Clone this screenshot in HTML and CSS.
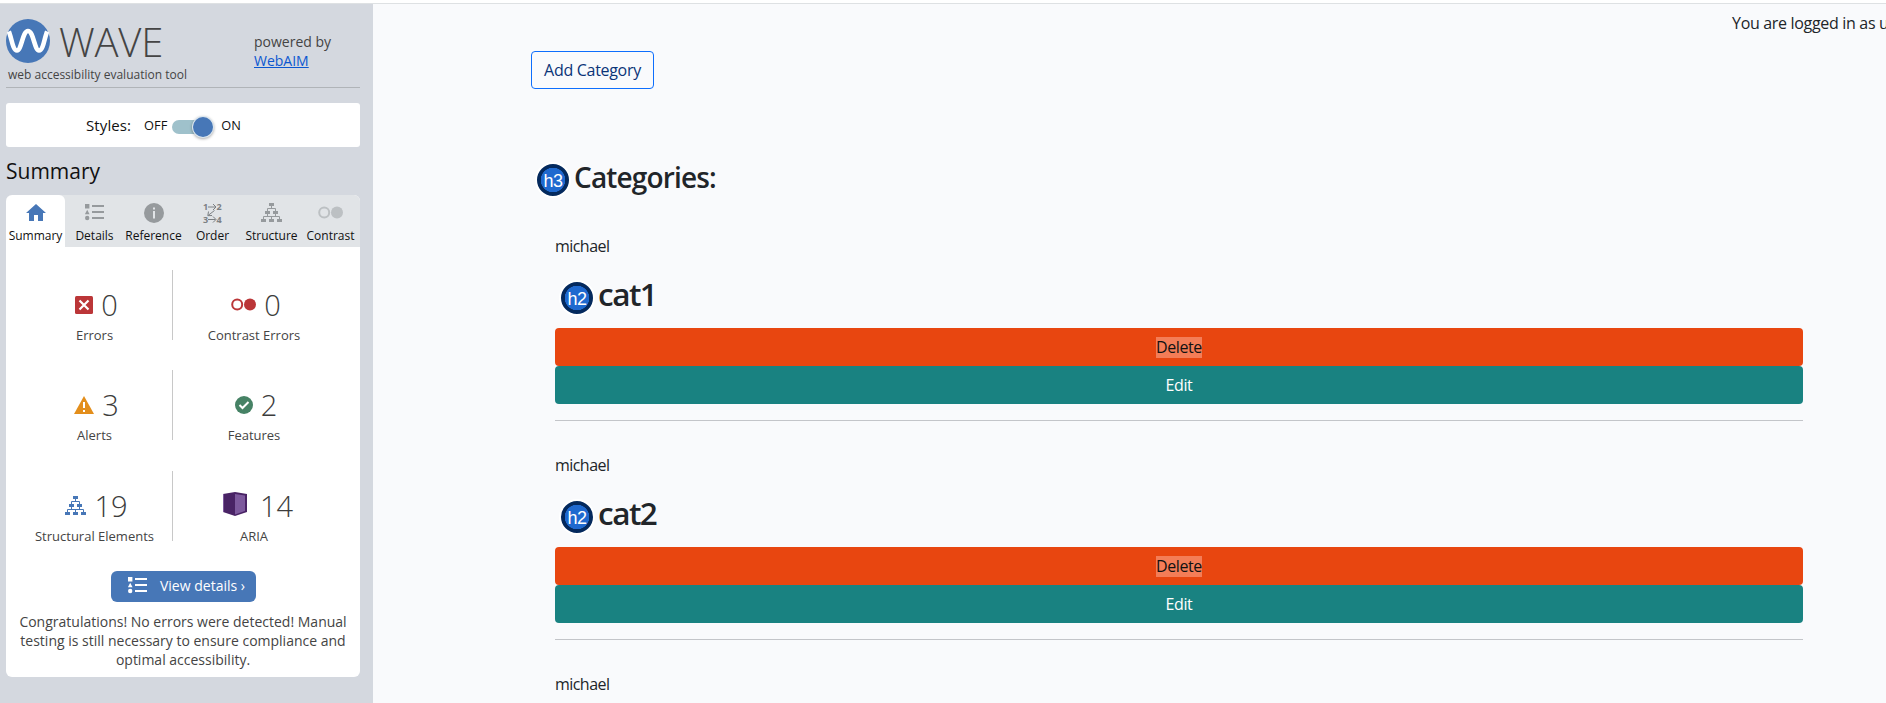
FILE: index.html
```html
<!DOCTYPE html>
<html lang="en">
<head>
<meta charset="utf-8">
<title>Categories</title>
<link rel="stylesheet" href="styles.css">
</head>
<body>
<svg class="defs" width="0" height="0">
  <symbol id="list" viewBox="0 0 20 17"><path d="M0 0h4.400v4.400H0zM2.200 5.800 4.600 10.300H-.2z"/><circle cx="2.200" cy="14" r="2.200"/><path d="M7 1h12v2H7zM7 7h12v2H7zM7 13h12v2H7z"/></symbol>
  <symbol id="tree" viewBox="0 0 21 19"><path d="M8 0h5v3H8zM4 8h5v3H4zM12 8h5v3h-5zM0 16h5v3H0zM8 16h5v3H8zM16 16h5v3h-5z"/><path fill="none" stroke="currentColor" d="M10.500 3v2.500M6.500 8V5.500h8V8M6.500 11v2.500M14.500 11v2.500M2.500 16v-2.500h16V16M10.500 13.500V16"/></symbol>
  <symbol id="dots" viewBox="0 0 25 13"><circle cx="6.200" cy="6.500" r="5" fill="none" stroke="currentColor" stroke-width="2"/><circle cx="19" cy="6.500" r="6"/></symbol>
</svg>
<div class="topbar"></div>
<div class="shell">
  <aside class="sidebar">
    <header class="brand">
      <div class="brand-main">
        <div class="brand-row">
          <svg class="logo" viewBox="0 0 44 44"><circle cx="22" cy="22" r="22" fill="#4777b7"/><path d="M2.800 12.500C5.500 18 6.500 31.500 11 31.500S16.500 12 22 12s6.500 19.500 11 19.500S38.500 18 41.200 12.500" fill="none" stroke="#fff" stroke-width="4.600"/></svg>
          <span class="wordmark">WAVE</span>
        </div>
        <div class="tagline">web accessibility evaluation tool</div>
      </div>
      <div class="powered">powered by<br><a href="#">WebAIM</a></div>
    </header>
    <div class="styles-box">
      <span class="styles-label">Styles:</span><span class="state">OFF</span><span class="toggle"><span class="knob"></span></span><span class="state">ON</span>
    </div>
    <h2 class="title">Summary</h2>
    <div class="panel">
      <nav class="tabs">
        <div class="tab active"><svg width="20" height="17" viewBox="0 0 20 17"><path d="M10 0 20 9h-3v8h-5v-6H8v6H3V9H0z"/></svg><span>Summary</span></div>
        <div class="tab"><svg width="20" height="17"><use href="#list"/></svg><span>Details</span></div>
        <div class="tab"><svg width="20" height="20" viewBox="0 0 20 20"><circle cx="10" cy="10" r="10"/><path fill="#e1e4e7" d="M9 4.500h2v2H9zM9 8h2v7.500H9z"/></svg><span>Reference</span></div>
        <div class="tab"><svg class="order" width="20" height="20" viewBox="0 0 20 20"><text x="0" y="7">1</text><text x="13.500" y="7">2</text><text x="0" y="19.500">3</text><text x="13.500" y="19.500">4</text><path d="M5 4h7.500M10 1l3 3-3 3M5 16.500h7.500M10 13.500l3 3-3 3M11.500 7.500 5 12.500M5.500 8.500 4.800 12.700 9 12.500"/></svg><span>Order</span></div>
        <div class="tab"><svg width="21" height="19"><use href="#tree"/></svg><span>Structure</span></div>
        <div class="tab faded"><svg width="25" height="13"><use href="#dots"/></svg><span>Contrast</span></div>
      </nav>
      <div class="stats">
        <div class="stat left"><div class="num"><svg width="18" height="18" viewBox="0 0 18 18"><rect width="18" height="18" rx="1.500" fill="#bb3638"/><path d="m4.500 4.500 9 9m0-9-9 9" stroke="#fff" stroke-width="2.200"/></svg><b>0</b></div><span>Errors</span></div>
        <div class="stat"><div class="num"><svg class="red" width="25" height="13"><use href="#dots"/></svg><b>0</b></div><span>Contrast Errors</span></div>
        <div class="stat left"><div class="num"><svg width="20" height="18" viewBox="0 0 20 18"><path d="m10 0 10 18H0z" fill="#e38e1b"/><path fill="#fff" d="M9 6h2v6H9zM9 14h2v2H9z"/></svg><b>3</b></div><span>Alerts</span></div>
        <div class="stat"><div class="num"><svg width="18" height="18" viewBox="0 0 18 18"><circle cx="9" cy="9" r="9" fill="#468265"/><path d="m4.500 9 3 3 6-6" fill="none" stroke="#fff" stroke-width="2"/></svg><b>2</b></div><span>Features</span></div>
        <div class="stat left"><div class="num"><svg class="blue" width="21" height="19"><use href="#tree"/></svg><b>19</b></div><span>Structural Elements</span></div>
        <div class="stat"><div class="num wide"><svg width="24" height="24" viewBox="0 0 24 24"><path d="M0 2 12 0l12 2v18l-12 4L0 20z" fill="#492365"/><path d="m12 2 10 1.500V19l-10 3.500z" fill="#7d599d"/><path d="M.5 2v18" stroke="#7d599d"/></svg><b>14</b></div><span>ARIA</span></div>
      </div>
      <button class="details"><svg width="20" height="17"><use href="#list"/></svg><span>View details ›</span></button>
      <p class="message">Congratulations! No errors were detected! Manual<br>testing is still necessary to ensure compliance and<br>optimal accessibility.</p>
    </div>
  </aside>
  <main class="content">
    <div class="login">You are logged in as user</div>
    <button class="add">Add Category</button>
    <h3 class="heading"><span class="badge">h3</span><span>Categories:</span></h3>
    <section class="category">
      <div class="owner">michael</div>
      <h2 class="name"><span class="badge">h2</span><span>cat1</span></h2>
      <button class="bar delete"><span>Delete</span></button>
      <button class="bar edit">Edit</button>
    </section>
    <section class="category">
      <div class="owner">michael</div>
      <h2 class="name"><span class="badge">h2</span><span>cat2</span></h2>
      <button class="bar delete"><span>Delete</span></button>
      <button class="bar edit">Edit</button>
    </section>
    <section class="category">
      <div class="owner">michael</div>
    </section>
  </main>
</div>
</body>
</html>
```

FILE: styles.css
```css
* { box-sizing: border-box; }
body { margin: 0; height: 703px; overflow: hidden; background: #f9fafc; font-family: "Open Sans", sans-serif; white-space: nowrap; }
svg { display: block; flex: none; fill: currentColor; }
.defs { display: none; }
button { font: inherit; border: 0; margin: 0; padding: 0; display: flex; align-items: center; justify-content: center; }
.topbar { height: 4px; background: #fff; border-bottom: 1px solid #dee1e3; }
.shell { display: flex; height: 699px; }

.sidebar { width: 373px; flex: none; background: #d4d8df; padding: 15px 13px 0 6px; color: #444; }
.brand { display: flex; height: 69px; border-bottom: 1px solid #b0b4b8; }
.brand-main { width: 248px; }
.brand-row { display: flex; height: 44px; }
.logo { width: 44px; height: 44px; }
.wordmark { margin-left: 9px; font-size: 40px; font-weight: 300; line-height: 46px; letter-spacing: -0.200px; }
.tagline { padding: 1px 0 0 2px; font-size: 12px; line-height: 22px; }
.powered { font-size: 14px; line-height: 19px; padding-top: 13px; }
.powered a { color: #0b57d0; }
.styles-box { margin-top: 15px; height: 44px; background: #fff; border-radius: 3px; color: #111; display: flex; align-items: center; padding-left: 80px; }
.styles-label { font-size: 15px; margin-right: 13px; letter-spacing: 0.100px; }
.state { font-size: 12.800px; }
.toggle { width: 41px; height: 14px; border-radius: 7px; background: #9fc1cb; margin: 4px 8px 0 5px; display: flex; justify-content: flex-end; align-items: center; }
.knob { width: 20px; height: 20px; flex: none; border-radius: 50%; background: #4777b7; box-shadow: 0 0 0 1px #dce7ef, 0 1px 3px 1px #0005; }
.title { margin: 9px 0 0; height: 39px; font-size: 21px; font-weight: 400; line-height: 30px; color: #111; }
.panel { height: 482px; background: #fff; border-radius: 6px; overflow: hidden; }
.tabs { height: 52px; background: #e1e4e7; display: grid; grid-template-columns: repeat(6, 59px); }
.tab { display: grid; grid-template-rows: 35px 12px; justify-items: center; align-items: center; font-size: 12px; line-height: 12px; color: #969a9d; }
.tab span { color: #111; }
.tab.active { background: #fff; color: #4777b7; border-radius: 6px 6px 0 0; }
.tab.faded { color: #bcc0c3; }
.order { overflow: visible; color: #7c8083; }
.order text { font-size: 9px; font-weight: 700; }
.order path { fill: none; stroke: currentColor; stroke-width: 1; }
.stats { display: grid; grid-template-columns: 158px 159px; row-gap: 30.500px; padding: 22.800px 0 0 9px; }
.stat { height: 70px; display: flex; flex-direction: column; align-items: center; font-size: 13px; line-height: 18px; padding-left: 2px; }
.stat.left { border-right: 1px solid #c8c8c8; }
.num { display: flex; align-items: center; gap: 8px; height: 56px; padding: 16px 0 2px 4px; font-size: 29px; line-height: 38px; }
.stat:not(.left) { padding-left: 3px; }
.num.wide { gap: 13px; padding-left: 8px; }
.num.wide svg { margin-top: -3px; }
.num b { font-weight: 350; color: #3c3c3c; }
.red { color: #bb3638; }
.blue { color: #4777b7; }
.details { width: 145px; height: 31px; margin: 30.200px 0 0 105px; padding: 0 0 1px 6px; border-radius: 6px; background: #4777b7; color: #fff; font-size: 14px; gap: 12px; }
.message { margin: 10px 0 0; text-align: center; font-size: 14px; line-height: 19px; }

.content { flex: 1; min-width: 0; padding-left: 158px; font-size: 16px; color: #212529; letter-spacing: -0.400px; overflow: hidden; }
.login { margin-left: 1201px; height: 47px; padding-top: 7px; line-height: 24px; letter-spacing: -0.320px; }
.add { width: 123px; height: 38px; border: 1px solid #0d6efd; border-radius: 4px; background: transparent; color: #0a3478; letter-spacing: -0.300px; }
.heading { margin: 71px 0 0 4px; height: 42px; display: flex; font-size: 28px; line-height: 34px; font-weight: 600; letter-spacing: -0.850px; }
.badge { width: 36px; height: 36px; flex: none; border: 2px solid #fff; border-radius: 50%; background: radial-gradient(circle, #1f69cf 12px, #04295d 12.500px); color: #fff; font: 400 18px/35px "Liberation Sans", sans-serif; letter-spacing: -0.500px; text-align: center; margin: 2px 3px 0 0; }
.category { width: 1248px; height: 219px; margin-left: 24px; padding-top: 32px; border-bottom: 1px solid #c3c5c9; }
.owner { height: 24px; line-height: 24px; letter-spacing: -0.550px; }
.name { margin: 20px 0 0 4px; height: 50px; display: flex; font-size: 31.500px; line-height: 32px; font-weight: 600; letter-spacing: -1.500px; }
.bar { width: 100%; height: 38px; border-radius: 4px; color: #fff; letter-spacing: inherit; }
.bar.delete { background: #e84610; color: #111; }
.bar.delete span { background: #f47d57; line-height: 21px; }
.bar.edit { background: #198281; }
```
